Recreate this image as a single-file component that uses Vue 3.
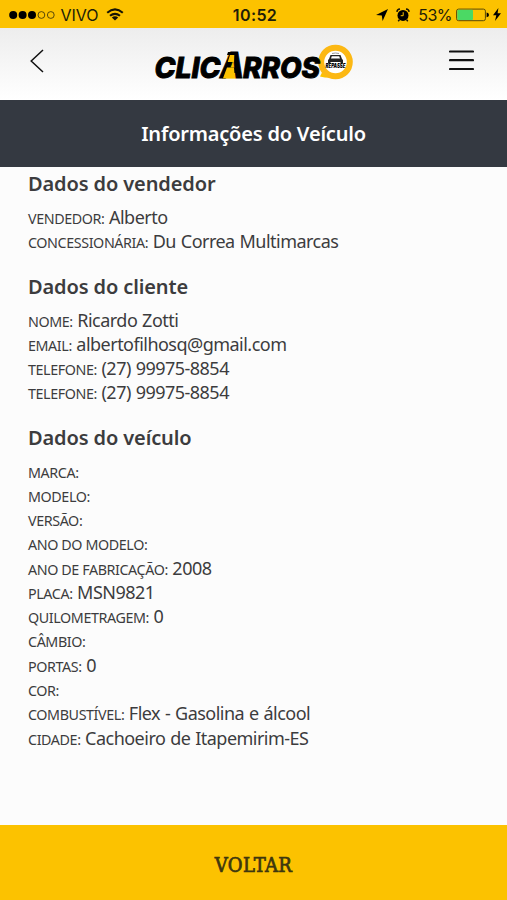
<template>
  <div class="screen">
    <div class="status">
      <div class="carrier">
        <svg class="signal" width="46" height="10" viewBox="0 0 46 10">
          <circle v-for="n in 3" :key="n" :cx="n * 9.4 - 5.2" cy="5" r="4" />
          <circle v-for="n in 2" :key="'e' + n" :cx="n * 9.4 + 23" cy="5" r="3.4" class="empty" />
        </svg>
        <span class="operator">VIVO</span>
        <svg class="wifi" width="18" height="13" viewBox="0 0 18 13">
          <path d="M1.2 4.7Q9-2 16.8 4.7M4 7.8q5-4 10 0" />
          <path class="dot" d="M5.8 9.5q3.2-2.4 6.4 0L9 12.6z" />
        </svg>
      </div>
      <span class="clock">10:52</span>
      <div class="power">
        <svg width="12" height="12" viewBox="0 0 12 12"><path d="M12 0 6.6 12 5.8 6.4 0 6z" /></svg>
        <svg class="alarm" width="14" height="14" viewBox="0 0 14 14">
          <circle cx="7" cy="7.4" r="5.5" />
          <path class="bells" d="M.9 3.8Q1.2 1.2 4 1M13.1 3.8Q12.8 1.2 10 1M3.4 11.7l-1.2 1.5M10.6 11.7l1.2 1.5" />
          <path class="hands" d="M7.2 4.2v3.5H4.7" />
        </svg>
        <span class="percent">53%</span>
        <svg class="battery" width="34" height="14" viewBox="0 0 34 14">
          <rect class="case" x=".6" y="1.1" width="28.8" height="11.6" rx="2" />
          <rect class="charge" x="1.3" y="1.8" width="15.7" height="10.2" rx="1" />
          <path d="M30.6 4.6q2.4.5 2.4 2.3t-2.4 2.3z" />
        </svg>
        <svg class="bolt" width="8" height="13" viewBox="0 0 8 13"><path d="M5.4 0 0 7.2h3.3L2 13l6-7.8H4.6z" /></svg>
      </div>
    </div>

    <header class="navbar">
      <svg class="back" width="14" height="24" viewBox="0 0 14 24"><path d="M13 1 1.2 12 13 23" /></svg>
      <svg class="logo" width="200" height="38" viewBox="0 0 200 38">
        <path class="gold" d="M166 34.500l5-10 9 11q-7 1-14-1z" />
        <circle class="ring" cx="181.500" cy="20" r="14.300" />
        <path class="gold" d="M74 12h6.500l1.500 24.500H68z" />
        <text class="word" x="0.500" y="36" textLength="66" lengthAdjust="spacingAndGlyphs">CLIC</text>
        <text class="word big" x="66" y="36" textLength="24" lengthAdjust="spacingAndGlyphs">A</text>
        <path class="bridge" d="M74 10h10v3H73z" />
        <path class="gold" d="M76 13h4.300l-.3 7h-6.300zM73 25.500h7l.8 10.800H69z" />
        <text class="word" x="89" y="36" textLength="77" lengthAdjust="spacingAndGlyphs">RROS</text>
        <path class="car" d="M175 17l1.500-4h10l1.500 4 1 1v3.500h-2.500V20h-10v1.500H174V18zM177 16.500h9l-.8-2.200h-7.400z" />
        <path class="roof" d="M178 11.500q3.500-1 7 0" />
        <text class="repasse" x="171.500" y="25.600" textLength="20" lengthAdjust="spacingAndGlyphs">REPASSE</text>
      </svg>
      <svg class="menu" width="25" height="21" viewBox="0 0 25 21"><path d="M1 1.500h23M1 10.200h23M1 19h23" /></svg>
    </header>

    <h1>Informações do Veículo</h1>

    <main>
      <section v-for="group in groups" :key="group.title">
        <h2>{{ group.title }}</h2>
        <p v-for="(row, i) in group.rows" :key="i">
          <span class="label">{{ row[0] }}:</span>
          <span class="value">{{ row[1] }}</span>
        </p>
      </section>
    </main>

    <button type="button" class="voltar">VOLTAR</button>
  </div>
</template>

<script setup>
const groups = [
  {
    title: 'Dados do vendedor',
    rows: [
      ['VENDEDOR', 'Alberto'],
      ['CONCESSIONÁRIA', 'Du Correa Multimarcas'],
    ],
  },
  {
    title: 'Dados do cliente',
    rows: [
      ['NOME', 'Ricardo Zotti'],
      ['EMAIL', 'albertofilhosq@gmail.com'],
      ['TELEFONE', '(27) 99975-8854'],
      ['TELEFONE', '(27) 99975-8854'],
    ],
  },
  {
    title: 'Dados do veículo',
    rows: [
      ['MARCA', ''],
      ['MODELO', ''],
      ['VERSÃO', ''],
      ['ANO DO MODELO', ''],
      ['ANO DE FABRICAÇÃO', '2008'],
      ['PLACA', 'MSN9821'],
      ['QUILOMETRAGEM', '0'],
      ['CÂMBIO', ''],
      ['PORTAS', '0'],
      ['COR', ''],
      ['COMBUSTÍVEL', 'Flex - Gasolina e álcool'],
      ['CIDADE', 'Cachoeiro de Itapemirim-ES'],
    ],
  },
]
</script>

<style>
body {
  margin: 0;
}
</style>

<style scoped>
.screen {
  display: flex;
  flex-direction: column;
  height: 900px;
  overflow: hidden;
  background: #fcfcfc;
  color: #3c3c3e;
  font-family: 'Noto Sans', sans-serif;
}

.status {
  display: grid;
  grid-template-columns: 1fr auto 1fr;
  align-items: center;
  box-sizing: border-box;
  height: 28px;
  padding: 1px 6px 0 9px;
  background: #fcc200;
  color: #211d08;
  font-family: Inter, sans-serif;
  font-size: 16px;
}

.carrier,
.power {
  display: flex;
  align-items: center;
}

.power {
  justify-content: flex-end;
}

.empty {
  fill: none;
  stroke: #30290a;
  stroke-width: 0.8;
}

.operator {
  margin: 0 7px 0 5.5px;
}

.wifi path {
  fill: none;
  stroke: #171405;
  stroke-width: 2.1;
}

.wifi .dot {
  fill: #171405;
  stroke: none;
}

.clock {
  font-weight: 600;
  letter-spacing: 0.4px;
}

.alarm {
  margin: 0 8px;
}

.bells {
  fill: none;
  stroke: #171405;
  stroke-width: 1.5;
}

.hands {
  fill: none;
  stroke: #fcc200;
}

.percent {
  margin-right: 4px;
  letter-spacing: -0.5px;
}

.case {
  fill: none;
  stroke: #594909;
}

.charge {
  fill: #4bd964;
}

.bolt {
  margin-left: 3px;
}

.navbar {
  display: flex;
  align-items: center;
  justify-content: space-between;
  box-sizing: border-box;
  height: 72px;
  padding: 0 33px 6px 30px;
  background: linear-gradient(#ededed, #fff);
}

.back path,
.menu path {
  fill: none;
  stroke: #111;
  stroke-width: 1.5;
}

.logo {
  margin-left: 14px;
  overflow: visible;
}

.menu {
  margin-bottom: 2px;
}

.menu path {
  stroke-width: 2.2;
  stroke-linecap: round;
}

.word {
  font: italic 800 28px Inter, sans-serif;
  stroke: #000;
  stroke-width: 0.9;
}

.big {
  font-size: 35px;
}

.gold {
  fill: #fcc200;
}

.ring {
  fill: #fff;
  stroke: #fcb813;
  stroke-width: 6;
}

.roof {
  fill: none;
  stroke: #999;
}

.car {
  fill: #222;
  fill-rule: evenodd;
}

.repasse {
  font: italic 900 5.5px Inter, sans-serif;
}

h1 {
  margin: 0;
  height: 67px;
  background: #343941;
  color: #fff;
  text-align: center;
  font-size: 20px;
  font-weight: 600;
  line-height: 67px;
  letter-spacing: -0.2px;
}

main {
  flex: 1;
  padding: 3px 28px 0;
}

section {
  margin-bottom: 19px;
}

h2 {
  margin: 0 0 7px;
  font-size: 20px;
  font-weight: 600;
  line-height: 28px;
  letter-spacing: -0.12px;
}

p {
  height: 24.27px;
  margin: 0;
  font-size: 18px;
  line-height: 24.27px;
  white-space: nowrap;
}

.label {
  margin-right: 4.5px;
  font-size: 14.3px;
  letter-spacing: -0.4px;
}

.value {
  letter-spacing: -0.52px;
  word-spacing: 0.7px;
}

.voltar {
  height: 75px;
  padding: 4px 0 0;
  border: 0;
  background: #fcc200;
  color: #3e370e;
  font: 20px 'DejaVu Serif Condensed', 'DejaVu Serif', serif;
  letter-spacing: 0.4px;
  -webkit-text-stroke: 0.7px #3e370e;
}
</style>
